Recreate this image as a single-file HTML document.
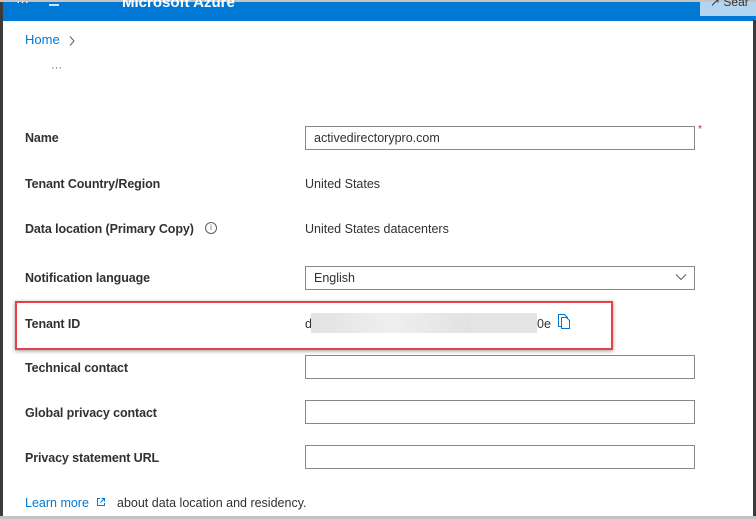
<!DOCTYPE html>
<html><head><meta charset="utf-8"><style>
*{margin:0;padding:0;box-sizing:border-box}
body{width:756px;height:519px;overflow:hidden;background:#fff;font-family:"Liberation Sans",Arial,sans-serif;font-size:12.5px;color:#323130;position:relative}
.a{position:absolute;white-space:nowrap}
.lbl{left:25px;font-weight:bold;color:#323130;font-size:12.5px;letter-spacing:-0.1px}
.val{left:305px}
.box{position:absolute;left:305px;width:390px;height:24px;border:1px solid #8a8886;background:#fff}
</style></head><body>
<div class="a" style="left:0;top:0;width:756px;height:2px;background:#c4c4c4"></div>
<div class="a" style="left:0;top:2px;width:756px;height:19px;background:#0078d4"></div>
<div class="a" style="left:16px;top:-6px;color:#fff;font-size:13px">···</div>
<div class="a" style="left:49px;top:4px;width:10px;height:1.5px;background:#cfe6f7"></div>
<div class="a" style="left:122px;top:-6px;color:#fff;font-size:15px;font-weight:bold">Microsoft Azure</div>
<div class="a" style="left:700px;top:2px;width:56px;height:14px;background:#b4d5f1"></div>
<div class="a" style="left:710px;top:-5px;color:#323130;font-size:12px">↗ Sear</div>
<div class="a" style="left:0;top:2px;width:3px;height:517px;background:#3b3b3b"></div>
<div class="a" style="left:753px;top:20px;width:3px;height:499px;background:#3b3b3b"></div>
<div class="a" style="left:0;top:516px;width:756px;height:3px;background:#c4c4c4"></div>

<div class="a" style="left:25px;top:32px;color:#0078d4;font-size:13px">Home</div>
<svg class="a" style="left:68px;top:35px" width="8" height="12"><path d="M2 1.5L6 6L2 10.5" fill="none" stroke="#605e5c" stroke-width="1"/></svg>
<div class="a" style="left:51px;top:62px;color:#605e5c;font-size:11px">···</div>

<div class="a lbl" style="top:131px">Name</div>
<div class="box" style="top:126px"></div>
<div class="a val" style="left:314px;top:131px">activedirectorypro.com</div>
<div class="a" style="left:698px;top:124px;color:#a4262c;font-size:10px">*</div>

<div class="a lbl" style="top:177px">Tenant Country/Region</div>
<div class="a val" style="top:177px">United States</div>

<div class="a lbl" style="top:222px">Data location (Primary Copy)</div>
<div class="a" style="left:205px;top:222px;width:12px;height:12px;border:1px solid #605e5c;border-radius:50%;font-size:8px;text-align:center;line-height:10px;color:#605e5c">i</div>
<div class="a val" style="top:222px">United States datacenters</div>

<div class="a lbl" style="top:271px">Notification language</div>
<div class="box" style="top:266px"></div>
<div class="a val" style="left:314px;top:271px">English</div>
<svg class="a" style="left:675px;top:273px" width="12" height="8"><path d="M1 1.5L6 6.5L11 1.5" fill="none" stroke="#605e5c" stroke-width="1"/></svg>

<div class="a" style="left:15px;top:301px;width:598px;height:49px;border:2.5px solid #e8404a;box-shadow:0 1px 4px rgba(0,0,0,.4)"></div>
<div class="a lbl" style="top:317px">Tenant ID</div>
<div class="a val" style="top:317px">d</div>
<div class="a" style="left:311px;top:313px;width:160px;height:20px;background:linear-gradient(90deg,#e2e2e2,#efefef 50%,#e2e2e2)"></div>
<div class="a" style="left:471px;top:313px;width:66px;height:20px;background:#e4e4e4"></div>
<div class="a" style="left:537px;top:317px">0e</div>
<svg class="a" style="left:557px;top:313px" width="14" height="16"><path d="M1.5 1.5h6l3 3v9h-9z" fill="none" stroke="#0078d4"/><path d="M4.5 4.5h5l3 3v8h-8z" fill="#fff" stroke="#0078d4"/></svg>

<div class="a lbl" style="top:361px">Technical contact</div>
<div class="box" style="top:355px"></div>
<div class="a lbl" style="top:406px">Global privacy contact</div>
<div class="box" style="top:400px"></div>
<div class="a lbl" style="top:451px">Privacy statement URL</div>
<div class="box" style="top:445px"></div>

<div class="a" style="left:25px;top:496px;color:#0078d4">Learn more</div>
<svg class="a" style="left:96px;top:497px" width="10" height="10"><path d="M4 1.5H1.5v7h7V6M5.5 1.5h3v3M8.5 1.5L4.5 5.5" fill="none" stroke="#0078d4"/></svg>
<div class="a" style="left:117px;top:496px">about data location and residency.</div>
</body></html>
